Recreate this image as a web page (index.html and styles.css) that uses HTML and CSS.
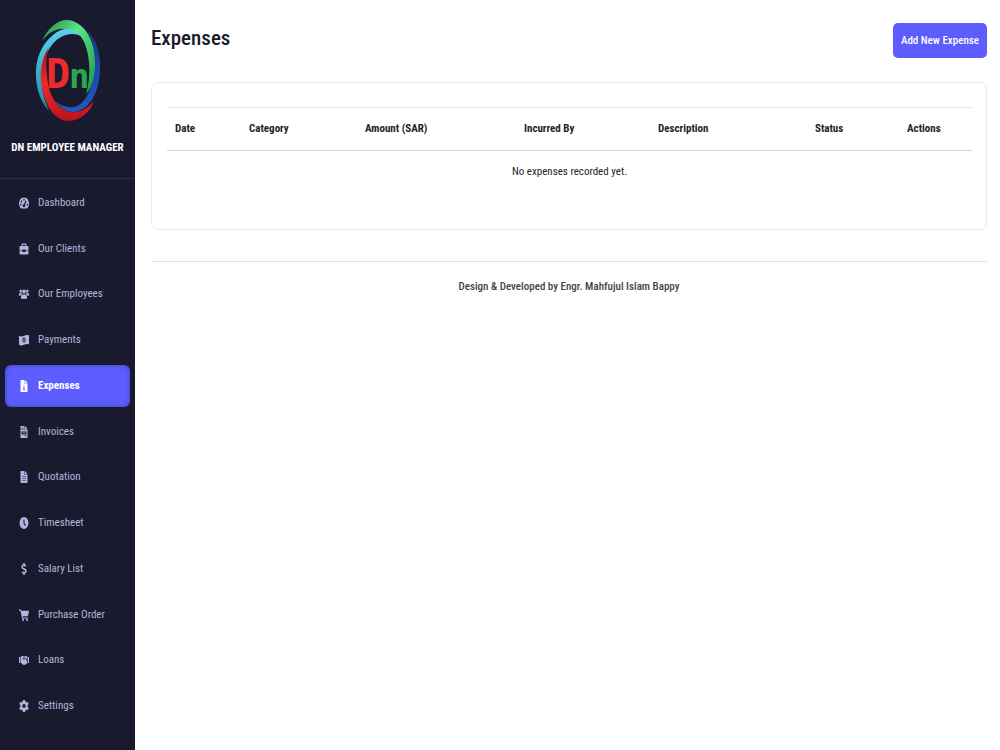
FILE: index.html
```html
<!DOCTYPE html>
<html lang="en">
<head>
    <meta charset="UTF-8">
    <meta name="viewport" content="width=device-width, initial-scale=1.0">
    <title>Expenses - DN Employee Manager</title>
    <link rel="stylesheet" href="styles.css">
</head>
<body>
    <aside class="sidebar">
        <div class="brand">
            <svg class="logo" viewBox="0 0 66 102" role="img" aria-label="DN logo">
                <defs>
                    <linearGradient id="green" x1="0" y1="0" x2="1" y2="1">
                        <stop offset="0" stop-color="#1d8a45"/>
                        <stop offset="0.4" stop-color="#5be584"/>
                        <stop offset="1" stop-color="#149446"/>
                    </linearGradient>
                    <linearGradient id="cyan" x1="0" y1="0" x2="0" y2="1">
                        <stop offset="0" stop-color="#5cd0f0"/>
                        <stop offset="1" stop-color="#168fac"/>
                    </linearGradient>
                    <linearGradient id="red" x1="0" y1="0" x2="0" y2="1">
                        <stop offset="0" stop-color="#a80f16"/>
                        <stop offset="0.5" stop-color="#ee2a2c"/>
                        <stop offset="1" stop-color="#b5141a"/>
                    </linearGradient>
                    <linearGradient id="blue" x1="0" y1="0" x2="0" y2="1">
                        <stop offset="0" stop-color="#153a86"/>
                        <stop offset="1" stop-color="#2158c0"/>
                    </linearGradient>
                </defs>
                <path fill="url(#blue)" d="M51 10C61 18 66 33 65 51C64 76 51 93 37 92C30 91 24 87 20 81C26 86 33 88 39 87C50 85 58 69 59 49C60 33 58 19 51 10Z"/>
                <path fill="url(#cyan)" d="M49 18C41 6 28 6 18 15C6 25 0 39 1 58C2 72 7 83 14 91C9 80 6 69 7 55C8 37 15 23 26 17C34 13 42 13 49 18Z"/>
                <path fill="url(#green)" d="M7 21C13 8 22 0 32 0C48 1 60 18 60 43C60 56 57 68 51 74C54 64 55 53 54 42C52 21 44 9 31 9C21 8 13 13 7 21Z"/>
                <path fill="url(#red)" d="M14 27C7 37 5 50 6 62C9 87 21 102 35 101C46 100 55 92 59 81C51 90 44 93 36 92C23 90 13 76 12 55C11 43 11 34 14 27Z"/>
                <text class="logo-d" x="11" y="68">D</text>
                <text class="logo-n" x="34" y="68">n</text>
            </svg>
            <div class="brand-name">DN EMPLOYEE MANAGER</div>
        </div>
        <nav class="menu">
            <a class="menu-item" href="#">
                <svg class="icon" viewBox="0 0 20 20" preserveAspectRatio="none"><path fill-rule="evenodd" d="M10 1a10 10 0 0 0-8 16l2 2h12l2-2A10 10 0 0 0 10 1ZM10 3a1.400 1.400 0 1 1 0 3 1.400 1.400 0 0 1 0-3ZM5 6a1.400 1.400 0 1 1 0 3 1.400 1.400 0 0 1 0-3ZM3.500 11a1.400 1.400 0 1 1 0 3 1.400 1.400 0 0 1 0-3ZM16.500 11a1.400 1.400 0 1 1 0 3 1.400 1.400 0 0 1 0-3ZM13 6l2 1-3 6a2.500 2.500 0 1 1-2-1Z"/></svg>
                Dashboard
            </a>
            <a class="menu-item" href="#">
                <svg class="icon" viewBox="0 0 20 20" preserveAspectRatio="none"><path fill-rule="evenodd" d="M5 5V3q0-2 2-2h6q2 0 2 2v2h2q2 0 2 2v5h-6v-1H7v1H1V7q0-2 2-2ZM7 5h6V3H7ZM1 13h6v2h6v-2h6v4q0 2-2 2H3q-2 0-2-2Z"/></svg>
                Our Clients
            </a>
            <a class="menu-item" href="#">
                <svg class="icon" viewBox="0 0 20 20" preserveAspectRatio="none"><circle cx="10" cy="6" r="3.500"/><circle cx="3.500" cy="5" r="2.500"/><circle cx="16.500" cy="5" r="2.500"/><path d="M4 18v-3q0-4 4-4h4q4 0 4 4v3ZM0 13v-2q0-3 3-3h2q1 2 2 2-4 1-4 3ZM20 13v-2q0-3-3-3h-2q-1 2-2 2 4 1 4 3Z"/></svg>
                Our Employees
            </a>
            <a class="menu-item" href="#">
                <svg class="icon" viewBox="0 0 20 20" preserveAspectRatio="none"><path fill-rule="evenodd" d="M0 3q5 2 10 0t10-1v15q-5-1-10 1t-10 0ZM10 6c-4 0-4 8 0 8s4-8 0-8ZM9 8h2v4H9Z"/></svg>
                Payments
            </a>
            <a class="menu-item active" href="#" aria-current="page">
                <svg class="icon" viewBox="0 0 20 20" preserveAspectRatio="none"><path fill-rule="evenodd" d="M3 0h8v6h6v14H3ZM12 0l5 5h-5ZM9 9h2v2H9ZM8 12h3v4h1v1H8v-1h1v-3H8Z"/></svg>
                Expenses
            </a>
            <a class="menu-item" href="#">
                <svg class="icon" viewBox="0 0 20 20" preserveAspectRatio="none"><path fill-rule="evenodd" d="M3 0h8v6h6v14H3ZM12 0l5 5h-5ZM5 3v1h4V3ZM5 5v1h4V5ZM5 9v5h10V9ZM7 11h6v1H7ZM11 16v1h4v-1Z"/></svg>
                Invoices
            </a>
            <a class="menu-item" href="#">
                <svg class="icon" viewBox="0 0 20 20" preserveAspectRatio="none"><path fill-rule="evenodd" d="M3 0h8v6h6v14H3ZM12 0l5 5h-5ZM6 9v1h8V9ZM6 12v1h8v-1ZM6 15v1h8v-1Z"/></svg>
                Quotation
            </a>
            <a class="menu-item" href="#">
                <svg class="icon" viewBox="0 0 20 20" preserveAspectRatio="none"><path fill-rule="evenodd" d="M10 0a9 10 0 1 0 0 20 9 10 0 0 0 0-20ZM9 4h2v6l3 4-2 1-3-4Z"/></svg>
                Timesheet
            </a>
            <a class="menu-item" href="#">
                <svg class="icon" viewBox="0 0 20 20" preserveAspectRatio="none"><path class="line" d="M14 5C11 3 6 3 6 6.500c0 4 8 2.500 8 7 0 3.500-5 3.500-8 1.500M10 0v4M10 16v4"/></svg>
                Salary List
            </a>
            <a class="menu-item" href="#">
                <svg class="icon" viewBox="0 0 20 20" preserveAspectRatio="none"><path d="M0 1h4l1 2h15l-2 9H7l1 2h10v2H6L3 3H0Z"/><circle cx="8" cy="18" r="2"/><circle cx="16" cy="18" r="2"/></svg>
                Purchase Order
            </a>
            <a class="menu-item" href="#">
                <svg class="icon" viewBox="0 0 20 20" preserveAspectRatio="none"><path d="M0 5h2v10H0ZM18 5h2v10h-2ZM3 5l4-2 3 1-3 4q2 3 5-1l5 6v1l-4 4h-5l-5-4ZM11 4l3-1 3 2v6l-4-5-3 1-1 1-1-1Z"/></svg>
                Loans
            </a>
            <a class="menu-item" href="#">
                <svg class="icon" viewBox="0 0 20 20" preserveAspectRatio="none"><path fill-rule="evenodd" d="M8 0h4l1 3 2 1 3-1 1 4-2 2v2l2 2-1 4-3-1-2 1-1 3H8l-1-3-2-1-3 1-1-4 2-2V9L1 7l1-4 3 1 2-1ZM10 6.500a3.500 3.500 0 1 0 0 7 3.500 3.500 0 0 0 0-7Z"/></svg>
                Settings
            </a>
        </nav>
    </aside>

    <main class="content">
        <header class="page-header">
            <h1>Expenses</h1>
            <button type="button" class="button">Add New Expense</button>
        </header>

        <section class="card">
            <table class="expenses">
                <thead>
                    <tr>
                        <th class="col-date">Date</th>
                        <th class="col-category">Category</th>
                        <th class="col-amount">Amount (SAR)</th>
                        <th class="col-incurred">Incurred By</th>
                        <th class="col-description">Description</th>
                        <th class="col-status">Status</th>
                        <th class="col-actions">Actions</th>
                    </tr>
                </thead>
                <tbody>
                    <tr>
                        <td colspan="7">No expenses recorded yet.</td>
                    </tr>
                </tbody>
            </table>
        </section>

        <footer class="footer">Design &amp; Developed by Engr. Mahfujul Islam Bappy</footer>
    </main>
</body>
</html>
```
FILE: styles.css
```css
* {
    box-sizing: border-box;
}

body {
    margin: 0;
    display: flex;
    min-height: 100vh;
    font-family: 'Roboto Condensed', 'Open Sans Condensed', 'Lato', sans-serif;
    font-size: 11px;
    line-height: 18px;
    color: #212529;
    background: #fff;
}

/* Sidebar */
.sidebar {
    flex: 0 0 135px;
    min-width: 0;
    display: flex;
    flex-direction: column;
    padding-bottom: 21px;
    background: #1a1a2e;
}

.brand {
    display: flex;
    flex-direction: column;
    align-items: center;
    gap: 17px;
    padding: 20px 0 21px;
    border-bottom: 1px solid #2d2d44;
}

.logo {
    width: 66px;
    height: 102px;
}

.logo-d,
.logo-n {
    font-family: 'DejaVu Sans Mono', monospace;
    font-weight: 700;
}

.logo-d {
    font-size: 40px;
    fill: #ee2a2c;
}

.logo-n {
    font-size: 34px;
    fill: #25a84f;
}

.brand-name {
    color: #fff;
    font-weight: 700;
    white-space: nowrap;
}

.menu {
    flex: 1;
    display: grid;
    grid-auto-rows: 1fr;
    padding-top: 1px;
}

.menu-item {
    display: flex;
    align-items: center;
    gap: 9px;
    min-height: 32px;
    margin: 2px 5px;
    padding: 0 14px;
    border-radius: 6px;
    color: #b4b4dc;
    text-decoration: none;
    white-space: nowrap;
}

.menu-item:hover {
    color: #fff;
}

.menu-item.active {
    background: #5d5dff;
    box-shadow: inset 0 0 5px rgba(0, 0, 0, 0.3);
    color: #fff;
    font-weight: 700;
}

.icon {
    width: 10px;
    height: 12px;
    fill: currentColor;
}

.icon .line {
    fill: none;
    stroke: currentColor;
    stroke-width: 3;
}

/* Content */
.content {
    flex: 1;
    min-width: 0;
    padding: 23px 13px 23px 16px;
}

.page-header {
    display: flex;
    justify-content: space-between;
    align-items: flex-start;
    margin-bottom: 24px;
}

h1 {
    margin: 0;
    font-size: 21px;
    line-height: 30px;
    font-weight: 500;
    color: #1a1a2e;
}

.button {
    height: 35px;
    padding: 0 8px;
    border: none;
    border-radius: 5px;
    background: #5d5dff;
    color: #fff;
    font: inherit;
    font-weight: 500;
    cursor: pointer;
}

.button:hover {
    background: #4a4ae6;
}

.card {
    padding: 24px 15px 36px;
    border: 1px solid #e6e8ea;
    border-radius: 7px;
}

.expenses {
    width: 100%;
    table-layout: fixed;
    border-collapse: collapse;
    border-top: 1px solid #e6e8ea;
}

.expenses th {
    padding: 12px 8px;
    border-bottom: 1px solid #ced4da;
    text-align: left;
    white-space: nowrap;
}

.expenses td {
    padding: 12px 8px;
    text-align: center;
}

.col-date {
    width: 74px;
}

.col-category {
    width: 116px;
}

.col-amount {
    width: 159px;
}

.col-incurred {
    width: 134px;
}

.col-description {
    width: 157px;
}

.col-status {
    width: 92px;
}

.col-actions {
    width: 73px;
}

.footer {
    margin-top: 31px;
    padding-top: 16px;
    border-top: 1px solid #e0e3e6;
    text-align: center;
    font-weight: 500;
    color: #444;
}
```
